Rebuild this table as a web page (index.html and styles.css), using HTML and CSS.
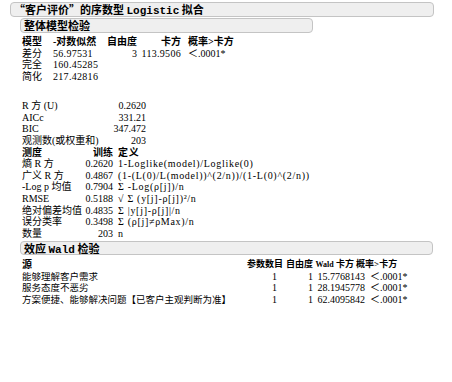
FILE: index.html
```html
<!DOCTYPE html>
<html lang="zh">
<head>
<meta charset="utf-8">
<link rel="stylesheet" href="styles.css">
</head>
<body>
<div class="report">
  <div class="bar title">“客户评价”的序数型 <span class="lat">Logistic</span> 拟合</div>
  <div class="bar sub">整体模型检验</div>

  <div class="t1">
    <div class="h">模型</div><div class="h">-对数似然</div><div class="h r">自由度</div><div class="h r">卡方</div><div class="h p">概率&gt;卡方</div>
    <div>差分</div><div class="n">56.97531</div><div class="r">3</div><div class="r n">113.9506</div><div class="p">＜.0001*</div>
    <div>完全</div><div class="n">160.45285</div><div></div><div></div><div></div>
    <div>简化</div><div class="n">217.42816</div><div></div><div></div><div></div>
  </div>

  <div class="t2">
    <div>R 方 (U)</div><div class="r">0.2620</div>
    <div>AICc</div><div class="r">331.21</div>
    <div>BIC</div><div class="r">347.472</div>
    <div>观测数(或权重和)</div><div class="r">203</div>
  </div>

  <div class="t3">
    <div class="h">测度</div><div class="h r">训练</div><div class="h d">定义</div>
    <div>熵 R 方</div><div class="r">0.2620</div><div class="d">1-Loglike(model)/Loglike(0)</div>
    <div>广义 R 方</div><div class="r">0.4867</div><div class="d">(1-(L(0)/L(model))^(2/n))/(1-L(0)^(2/n))</div>
    <div>-Log p 均值</div><div class="r">0.7904</div><div class="d">Σ -Log(ρ[j])/n</div>
    <div>RMSE</div><div class="r">0.5188</div><div class="d">√ Σ (y[j]-ρ[j])²/n</div>
    <div>绝对偏差均值</div><div class="r">0.4835</div><div class="d">Σ |y[j]-ρ[j]|/n</div>
    <div>误分类率</div><div class="r">0.3498</div><div class="d">Σ (ρ[j]≠ρMax)/n</div>
    <div>数量</div><div class="r">203</div><div class="d">n</div>
  </div>

  <div class="bar wald">效应 <span class="lat">Wald</span> 检验</div>

  <div class="t4">
    <div class="h">源</div><div class="h hs r">参数数目</div><div class="h hs r">自由度</div><div class="h hs r"><span class="wl">Wald</span> 卡方</div><div class="h hs hp">概率&gt;卡方</div>
    <div class="src">能够理解客户需求</div><div class="r c2">1</div><div class="r">1</div><div class="r vw">15.7768143</div><div class="vp">＜.0001*</div>
    <div class="src">服务态度不恶劣</div><div class="r c2">1</div><div class="r">1</div><div class="r vw">28.1945778</div><div class="vp">＜.0001*</div>
    <div class="src">方案便捷、能够解决问题【已客户主观判断为准】</div><div class="r c2">1</div><div class="r">1</div><div class="r vw">62.4095842</div><div class="vp">＜.0001*</div>
  </div>
</div>
</body>
</html>
```
FILE: styles.css
```css
html, body {
  margin: 0;
  padding: 0;
  background: #ffffff;
}

body {
  font-family: "Liberation Serif", "Noto Sans CJK SC", serif;
  font-size: 10px;
  line-height: 11.6px;
  color: #000000;
}

.report {
  display: flex;
  flex-direction: column;
  align-items: flex-start;
}

.bar {
  box-sizing: border-box;
  border: 1px solid #c4c4c4;
  background: #efefef;
  border-radius: 4px;
  font-family: "Noto Sans CJK SC", sans-serif;
  font-weight: bold;
  font-size: 11px;
  line-height: 13px;
  padding-left: 3px;
  white-space: nowrap;
}

.bar .lat {
  font-family: "Liberation Mono", monospace;
  font-size: 11px;
}

.title {
  margin: 2px 0 0 10px;
  width: 424px;
  height: 15px;
}

.sub {
  margin: 1px 0 0 20px;
  width: 293px;
  height: 15px;
}

.wald {
  margin: 2px 0 0 20px;
  width: 413px;
  height: 14px;
  line-height: 12px;
}

.t1, .t2, .t3, .t4 {
  display: grid;
  padding-left: 22px;
  white-space: nowrap;
  grid-auto-rows: 11.6px;
}

.t1 {
  margin-top: 3px;
  grid-template-columns: 31px 52px 32px 44px auto;
}

.t2 {
  margin-top: 17.8px;
  grid-template-columns: 84px 40px;
}

.t3 {
  grid-template-columns: 61px 30px auto;
}

.t4 {
  margin-top: 4px;
  grid-template-columns: 221px 40px 30px 41px auto;
}

.h {
  font-weight: bold;
}

.hs {
  font-size: 9px;
}

.r {
  text-align: right;
}

.n {
  letter-spacing: 0.3px;
}

.p {
  padding-left: 7px;
}

.d {
  padding-left: 5px;
  letter-spacing: 0.7px;
}

.src {
  font-family: "Noto Sans CJK SC", sans-serif;
  font-size: 9.5px;
  line-height: 11.6px;
}

.c2 {
  padding-right: 6px;
}

.wl {
  font-size: 8px;
}

.vw {
  margin-right: -11px;
}

.hp {
  padding-left: 2px;
}

.vp {
  padding-left: 16px;
}
```
